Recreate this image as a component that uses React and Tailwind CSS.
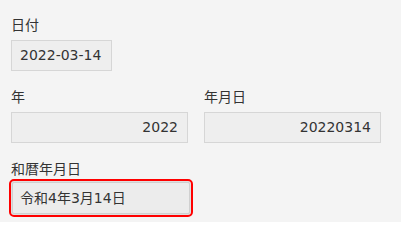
export default function App() {
  const font = { fontFamily: '"DejaVu Sans", "Noto Sans CJK JP", sans-serif' };
  return (
    <div className="w-[401px] h-[222px] bg-[#f4f4f4] text-[#333] text-[14px] overflow-hidden pl-[11px] pt-[15px]" style={font}>
      <div className="leading-[21px]">日付</div>
      <div className="mt-[4px] w-[101px] h-[31px] border border-[#d6d6d6] bg-[#eeeeee] flex items-center pl-[8px]">2022-03-14</div>

      <div className="mt-[16px] flex gap-[16px]">
        <div className="w-[177px]">
          <div className="leading-[21px]">年</div>
          <div className="mt-[4px] h-[31px] border border-[#d6d6d6] bg-[#eeeeee] flex items-center justify-end pr-[9px]">2022</div>
        </div>
        <div className="w-[177px]">
          <div className="leading-[21px]">年月日</div>
          <div className="mt-[4px] h-[31px] border border-[#d6d6d6] bg-[#eeeeee] flex items-center justify-end pr-[9px]">20220314</div>
        </div>
      </div>

      <div className="mt-[16px] leading-[21px]">和暦年月日</div>
      <div className="mt-[2px] ml-[1px] w-[178px] h-[32px] border border-[#d0d0d0] bg-[#ececec] rounded-[2px] flex items-center pl-[7px] outline-2 outline-offset-1 outline-[#ff0000] shadow-[0_0_3px_rgba(0,0,0,0.25)]">令和4年3月14日</div>
    </div>
  );
}
